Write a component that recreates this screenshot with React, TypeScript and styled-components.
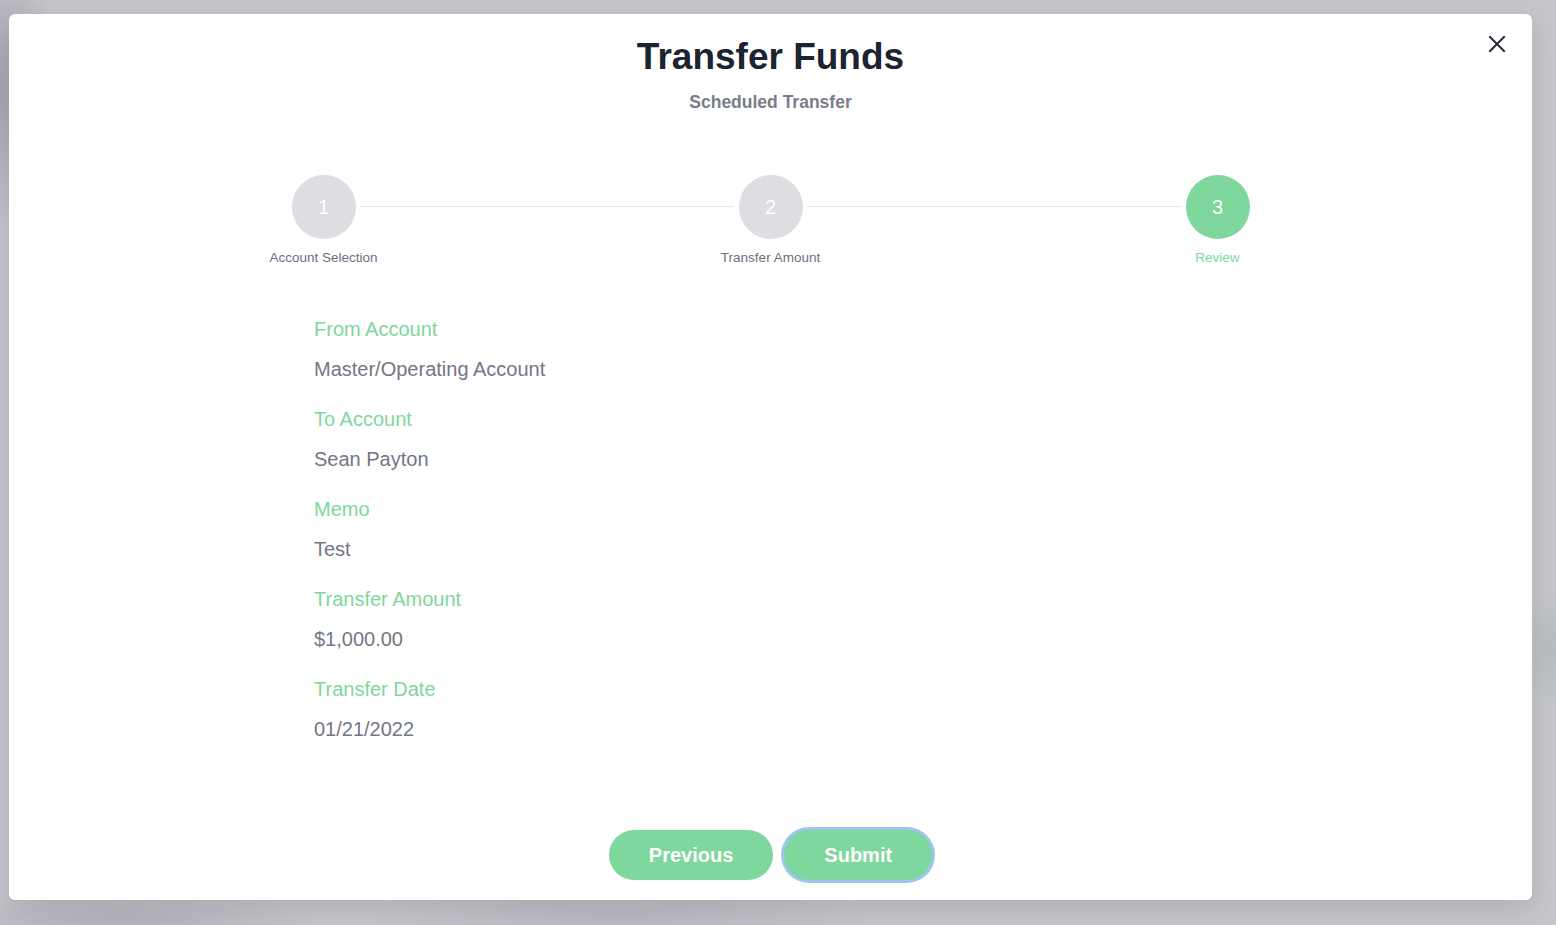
import styled, { createGlobalStyle } from 'styled-components'

const GlobalStyle = createGlobalStyle`
  * { box-sizing: border-box; }
  html, body { margin: 0; padding: 0; }
  body {
    font-family: "Liberation Sans", Arial, sans-serif;
    background: #c6c7cd;
  }
`

const green = '#7ed79c'

const Backdrop = styled.div`
  width: 1556px;
  height: 925px;
  padding: 14px 24px 25px 9px;
  background:
    radial-gradient(ellipse 60px 140px at 0px 90px, rgba(120, 122, 132, 0.45), transparent),
    radial-gradient(ellipse 200px 30px at 120px 920px, rgba(140, 142, 150, 0.35), transparent),
    radial-gradient(ellipse 260px 30px at 620px 915px, rgba(150, 152, 160, 0.3), transparent),
    radial-gradient(ellipse 40px 60px at 1556px 650px, rgba(150, 170, 160, 0.35), transparent),
    #c6c7cd;
`

const Modal = styled.div`
  position: relative;
  height: 886px;
  background: #ffffff;
  border-radius: 6px;
  box-shadow: 0 8px 28px rgba(60, 62, 72, 0.18);
  padding: 21px 0 20px;
  display: flex;
  flex-direction: column;
`

const CloseButton = styled.button`
  position: absolute;
  top: 20px;
  right: 25px;
  width: 20px;
  height: 20px;
  padding: 0;
  border: none;
  background: none;
  display: flex;
  align-items: center;
  justify-content: center;
  cursor: pointer;
`

const Title = styled.h1`
  margin: 0;
  text-align: center;
  font-size: 37px;
  line-height: 44px;
  font-weight: 700;
  color: #1c2331;
`

const Subtitle = styled.h2`
  margin: 13px 0 0;
  text-align: center;
  font-size: 17.5px;
  line-height: 21px;
  font-weight: 700;
  color: #7a7d8c;
`

const Stepper = styled.div`
  display: flex;
  align-items: flex-start;
  width: 958px;
  margin: 62px auto 0;
`

const Step = styled.div`
  width: 64px;
  flex: none;
  display: flex;
  flex-direction: column;
  align-items: center;
`

const Circle = styled.div<{ $active?: boolean }>`
  width: 64px;
  height: 64px;
  border-radius: 50%;
  background: ${({ $active }) => ($active ? green : '#dddde2')};
  color: #ffffff;
  font-size: 20px;
  display: flex;
  align-items: center;
  justify-content: center;
`

const StepLabel = styled.div<{ $active?: boolean }>`
  margin-top: 11px;
  font-size: 13.5px;
  line-height: 16px;
  white-space: nowrap;
  color: ${({ $active }) => ($active ? green : '#6e7080')};
`

const Connector = styled.div`
  flex: 1;
  height: 1px;
  margin: 31px 5px 0;
  background: #e2e6ee;
`

const Details = styled.dl`
  margin: 51px 0 0;
  padding-left: 305px;
  display: flex;
  flex-direction: column;
  gap: 26px;
`

const Field = styled.div`
  display: flex;
  flex-direction: column;
  gap: 16px;
`

const Label = styled.dt`
  font-size: 20px;
  line-height: 24px;
  color: ${green};
`

const Value = styled.dd`
  margin: 0;
  font-size: 20px;
  line-height: 24px;
  color: #747686;
`

const Actions = styled.div`
  margin-top: auto;
  display: flex;
  justify-content: center;
  gap: 11px;
`

const Button = styled.button<{ $focused?: boolean }>`
  height: 50px;
  padding: 0 40px;
  border: none;
  border-radius: 25px;
  background: ${green};
  color: #ffffff;
  font-family: "Liberation Sans", Arial, sans-serif;
  font-size: 20px;
  font-weight: 700;
  cursor: pointer;
  box-shadow: ${({ $focused }) => ($focused ? '0 0 0 3px #9fc5ef' : 'none')};
`

const steps = ['Account Selection', 'Transfer Amount', 'Review']

const fields = [
  { label: 'From Account', value: 'Master/Operating Account' },
  { label: 'To Account', value: 'Sean Payton' },
  { label: 'Memo', value: 'Test' },
  { label: 'Transfer Amount', value: '$1,000.00' },
  { label: 'Transfer Date', value: '01/21/2022' },
]

export default function App () {
  const current = 2
  return (
    <>
      <GlobalStyle />
      <Backdrop>
        <Modal>
          <CloseButton aria-label='Close'>
            <svg width='18' height='18' viewBox='0 0 18 18'>
              <path d='M2 2 L16 16 M16 2 L2 16' stroke='#262b38' strokeWidth='2' strokeLinecap='square' />
            </svg>
          </CloseButton>

          <Title>Transfer Funds</Title>
          <Subtitle>Scheduled Transfer</Subtitle>

          <Stepper>
            {steps.map((label, i) => (
              <>
                {i > 0 && <Connector key={`c${i}`} />}
                <Step key={label}>
                  <Circle $active={i === current}>{i + 1}</Circle>
                  <StepLabel $active={i === current}>{label}</StepLabel>
                </Step>
              </>
            ))}
          </Stepper>

          <Details>
            {fields.map(f => (
              <Field key={f.label}>
                <Label>{f.label}</Label>
                <Value>{f.value}</Value>
              </Field>
            ))}
          </Details>

          <Actions>
            <Button>Previous</Button>
            <Button $focused>Submit</Button>
          </Actions>
        </Modal>
      </Backdrop>
    </>
  )
}
